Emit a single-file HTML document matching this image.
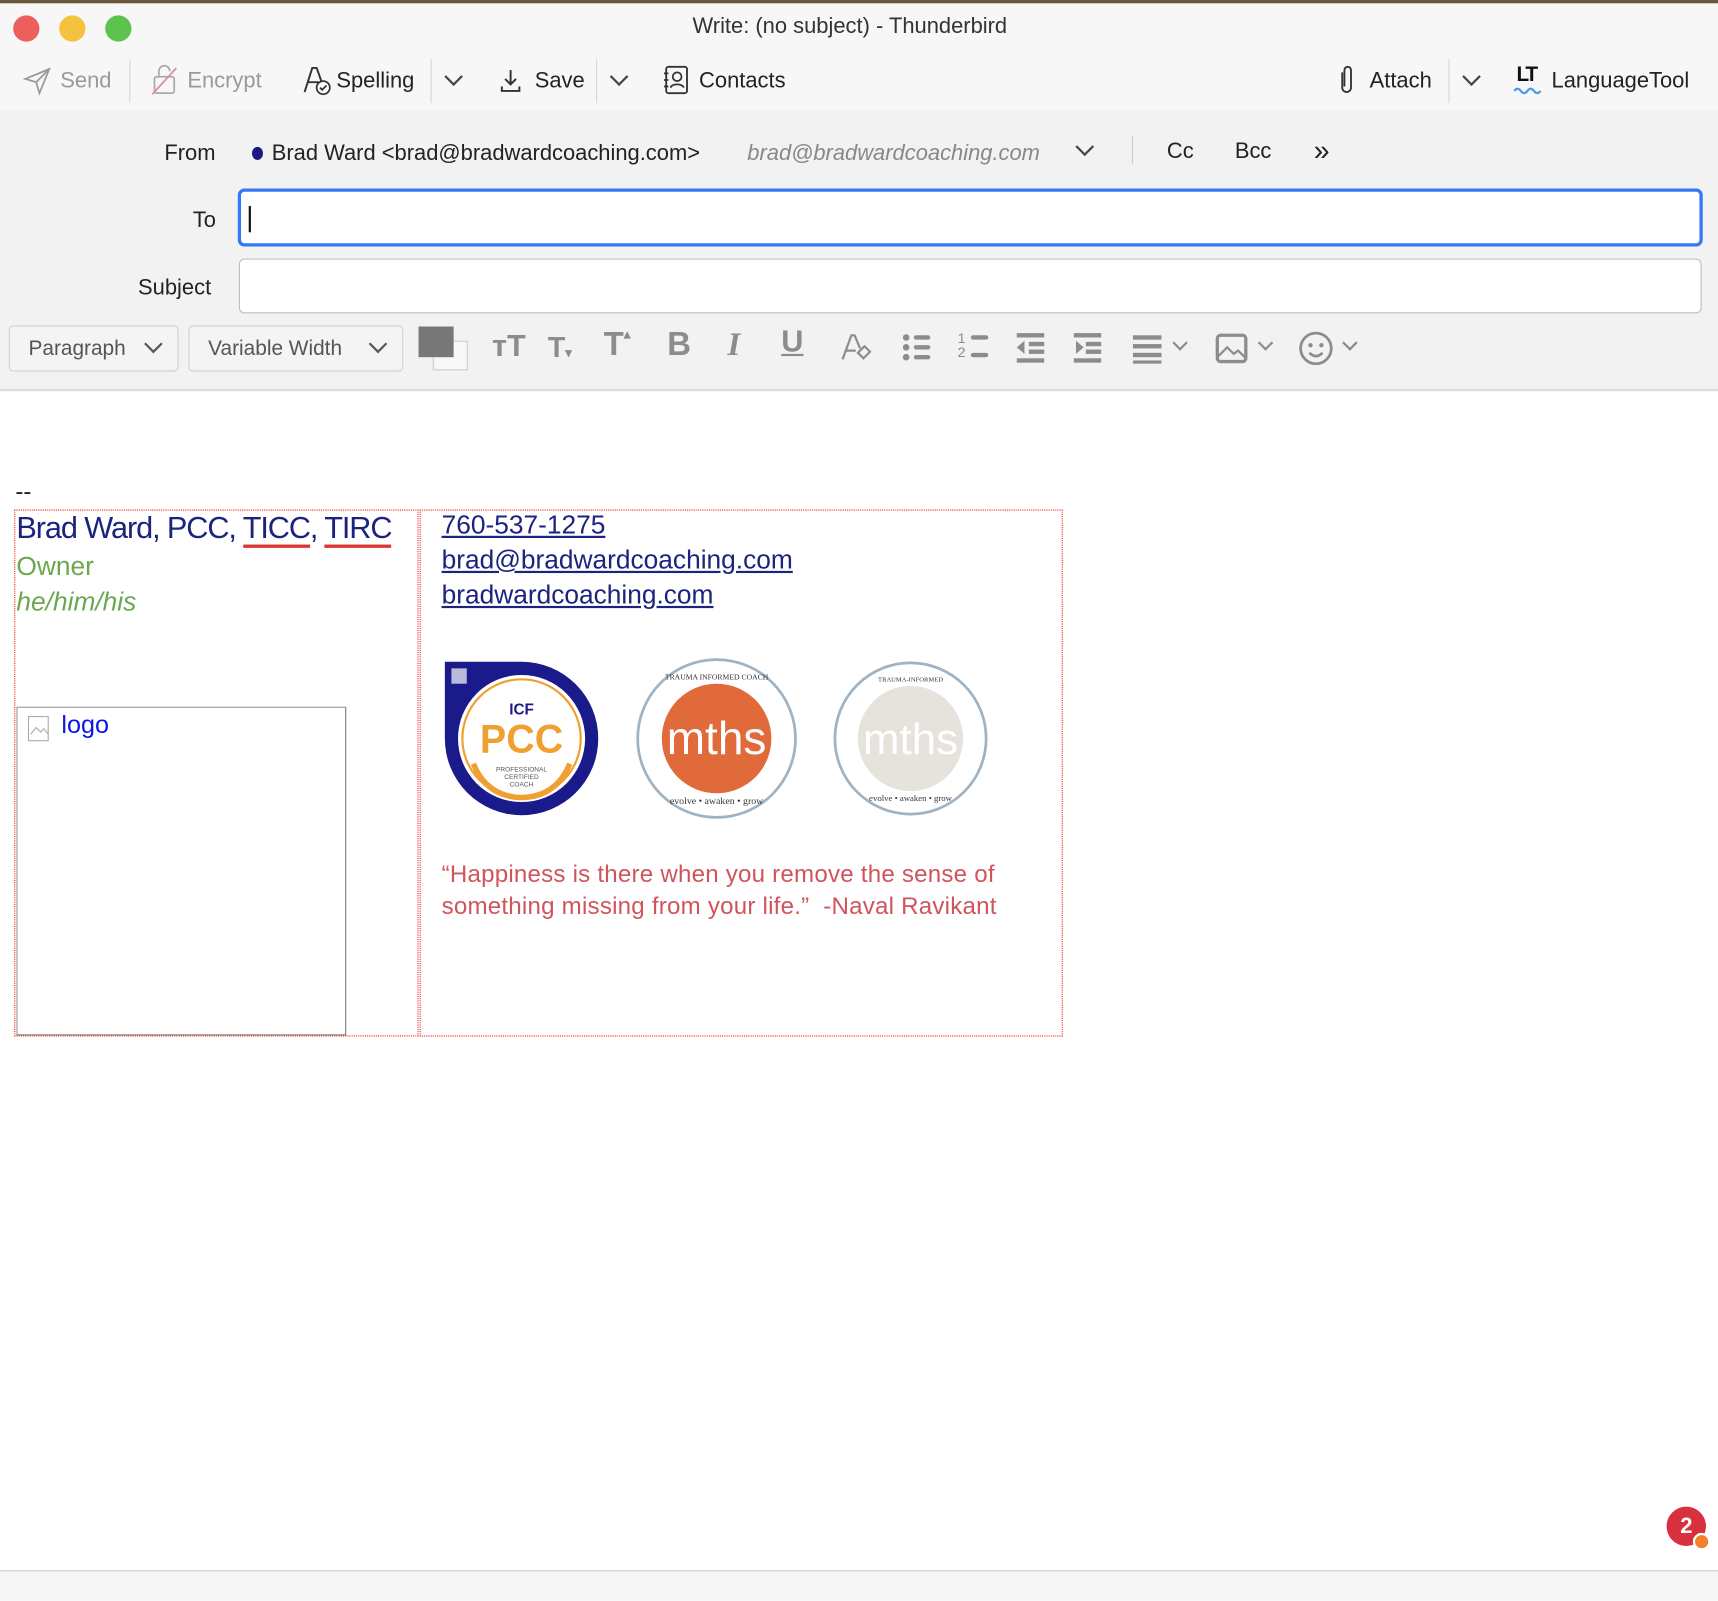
<!DOCTYPE html>
<html><head><meta charset="utf-8"><style>
html,body{margin:0;padding:0;width:1718px;height:1600px;overflow:hidden;background:#fff}
#w{position:absolute;left:0;top:0;width:1568px;height:1460px;transform:scale(1.0957);transform-origin:0 0;font-family:"Liberation Sans",sans-serif;color:#222}
.a{position:absolute;white-space:nowrap}
.tb{font-size:20px;color:#222}
.g{color:#9a9a9a}
.sep{position:absolute;width:1px;background:#d6d6d6}
.chev{position:absolute;width:10px;height:10px;border-right:2px solid #444;border-bottom:2px solid #444;transform:rotate(45deg)}
.ic{position:absolute;color:#8c8c8c;font-weight:bold}
.lnk{color:#1a237e;text-decoration:underline;font-size:24px}
</style></head><body><div id="w">
<div class="a" style="left:0;top:0;width:1568px;height:100px;background:#f7f7f7;border-top:3px solid #6b5a3a"></div>
<div class="a" style="left:12px;top:14px;width:24px;height:24px;border-radius:50%;background:#ed5f5a"></div>
<div class="a" style="left:54px;top:14px;width:24px;height:24px;border-radius:50%;background:#f4c23c"></div>
<div class="a" style="left:96px;top:14px;width:24px;height:24px;border-radius:50%;background:#5ec24f"></div>
<div class="a" style="left:632px;top:13px;font-size:20px;color:#333">Write: (no subject) - Thunderbird</div>

<svg class="a" style="left:20px;top:60px" width="28" height="28" viewBox="0 0 28 28"><path d="M3 12 L25 3 L16 25 L13 15 Z M13 15 L25 3" fill="none" stroke="#999" stroke-width="1.6"/></svg>
<div class="a tb g" style="left:55px;top:63px">Send</div>
<div class="sep" style="left:118px;top:54px;height:40px"></div>
<svg class="a" style="left:136px;top:58px" width="28" height="30" viewBox="0 0 28 30"><rect x="5" y="12" width="18" height="15" rx="2" fill="none" stroke="#aaa" stroke-width="1.6"/><path d="M9 12V7a5 5 0 0 1 10 0" fill="none" stroke="#aaa" stroke-width="1.6"/><path d="M3 28L25 4" stroke="#e08a9a" stroke-width="1.6"/></svg>
<div class="a tb g" style="left:171px;top:63px">Encrypt</div>
<svg class="a" style="left:275px;top:58px" width="30" height="30" viewBox="0 0 30 30"><path d="M3 26 L10 4 L14 4 L19 18 M6 17 H16" fill="none" stroke="#333" stroke-width="1.8"/><circle cx="20" cy="22" r="6" fill="#fff" stroke="#333" stroke-width="1.6"/><path d="M17 22l2 2 4-4" fill="none" stroke="#333" stroke-width="1.6"/></svg>
<div class="a tb" style="left:307px;top:63px">Spelling</div>
<div class="sep" style="left:393px;top:54px;height:40px"></div>
<div class="chev" style="left:408px;top:64px"></div>
<svg class="a" style="left:455px;top:62px" width="22" height="24" viewBox="0 0 22 24"><path d="M11 2V15 M6 10l5 5 5-5 M3 17v4h16v-4" fill="none" stroke="#333" stroke-width="1.8"/></svg>
<div class="a tb" style="left:488px;top:63px">Save</div>
<div class="sep" style="left:544px;top:54px;height:40px"></div>
<div class="chev" style="left:559px;top:64px"></div>
<svg class="a" style="left:604px;top:59px" width="26" height="28" viewBox="0 0 26 28"><rect x="4" y="2" width="19" height="24" rx="2" fill="none" stroke="#333" stroke-width="1.7"/><circle cx="14" cy="11" r="4" fill="none" stroke="#333" stroke-width="1.6"/><path d="M8 21c1-4 11-4 12 0M2 8h4M2 14h4M2 20h4" fill="none" stroke="#333" stroke-width="1.6"/></svg>
<div class="a tb" style="left:638px;top:63px">Contacts</div>

<svg class="a" style="left:1220px;top:58px" width="18" height="30" viewBox="0 0 18 30"><path d="M5 8v14a4 4 0 0 0 8 0V6a3 3 0 0 0-6 0v15" fill="none" stroke="#333" stroke-width="1.7"/></svg>
<div class="a tb" style="left:1250px;top:63px">Attach</div>
<div class="sep" style="left:1322px;top:54px;height:40px"></div>
<div class="chev" style="left:1337px;top:64px"></div>
<div class="a" style="left:1384px;top:58px;font-size:19px;font-weight:bold;color:#111;letter-spacing:-2px">LT</div>
<svg class="a" style="left:1381px;top:78px" width="30" height="8" viewBox="0 0 30 8"><path d="M1 5q3-4 6 0t6 0 6 0 6 0" fill="none" stroke="#4a9be8" stroke-width="2"/></svg>
<div class="a tb" style="left:1416px;top:63px">LanguageTool</div>

<div class="a" style="left:0;top:100px;width:1568px;height:255px;background:#f2f2f2;border-bottom:2px solid #dcdcdc"></div>
<div class="a tb" style="left:150px;top:129px">From</div>
<div class="a" style="left:230px;top:134px;width:10px;height:12px;border-radius:50%;background:#1a1a80"></div>
<div class="a tb" style="left:248px;top:129px">Brad Ward &lt;brad@bradwardcoaching.com&gt;</div>
<div class="a tb" style="left:682px;top:129px;color:#888;font-style:italic">brad@bradwardcoaching.com</div>
<div class="chev" style="left:984px;top:128px"></div>
<div class="sep" style="left:1033px;top:124px;height:26px;background:#ccc"></div>
<div class="a tb" style="left:1065px;top:127px">Cc</div>
<div class="a tb" style="left:1127px;top:127px">Bcc</div>
<div class="a tb" style="left:1199px;top:122px;font-size:26px">»</div>
<div class="a tb" style="left:176px;top:190px">To</div>
<div class="a" style="left:217px;top:172px;width:1331px;height:47px;border:3px solid #3478f6;border-radius:6px;background:#fff"></div>
<div class="a" style="left:227px;top:188px;width:2px;height:24px;background:#111"></div>
<div class="a tb" style="left:126px;top:252px">Subject</div>
<div class="a" style="left:218px;top:236px;width:1333px;height:48px;border:1px solid #bdbdbd;border-radius:5px;background:#fff"></div>

<div class="a" style="left:8px;top:297px;width:153px;height:40px;border:1px solid #cfcfcf;border-radius:4px;background:#f4f4f4"></div>
<div class="a" style="left:26px;top:308px;font-size:19px;color:#555">Paragraph</div>
<div class="chev" style="left:134px;top:308px;border-color:#555"></div>
<div class="a" style="left:172px;top:297px;width:194px;height:40px;border:1px solid #cfcfcf;border-radius:4px;background:#f4f4f4"></div>
<div class="a" style="left:190px;top:308px;font-size:19px;color:#555">Variable Width</div>
<div class="chev" style="left:339px;top:308px;border-color:#555"></div>
<div class="a" style="left:395px;top:311px;width:30px;height:25px;border:1px solid #ccc;background:#f8f8f8"></div>
<div class="a" style="left:382px;top:298px;width:32px;height:28px;background:#777"></div>
<div class="ic" style="left:449px;top:300px;font-size:28px">ᴛT</div>
<div class="ic" style="left:500px;top:302px;font-size:26px">T<span style="font-size:12px">▾</span></div>
<div class="ic" style="left:551px;top:298px;font-size:30px">T<span style="font-size:12px;vertical-align:top">▴</span></div>
<div class="ic" style="left:609px;top:298px;font-size:30px">B</div>
<div class="ic" style="left:664px;top:298px;font-size:30px;font-style:italic;font-family:'Liberation Serif',serif">I</div>
<div class="ic" style="left:713px;top:296px;font-size:28px;text-decoration:underline">U</div>
<svg class="a" style="left:766px;top:302px" width="30" height="30"><path d="M3 26 L11 4 L14 4 L19 16 M6 18 H15" fill="none" stroke="#8c8c8c" stroke-width="2"/><path d="M17 20 l6-6 5 5 -6 6z" fill="none" stroke="#8c8c8c" stroke-width="2"/></svg>
<svg class="a" style="left:822px;top:302px" width="30" height="30"><g fill="#8c8c8c"><circle cx="5" cy="6" r="3"/><circle cx="5" cy="15" r="3"/><circle cx="5" cy="24" r="3"/><rect x="12" y="4" width="15" height="4" rx="2"/><rect x="12" y="13" width="15" height="4" rx="2"/><rect x="12" y="22" width="15" height="4" rx="2"/></g></svg>
<div class="ic" style="left:874px;top:302px;font-size:13px;font-weight:normal;line-height:13px">1<br>2</div>
<svg class="a" style="left:884px;top:302px" width="20" height="30"><g fill="#8c8c8c"><rect x="2" y="4" width="16" height="4" rx="2"/><rect x="2" y="20" width="16" height="4" rx="2"/></g></svg>
<svg class="a" style="left:925px;top:302px" width="30" height="30"><g fill="#8c8c8c"><rect x="3" y="2" width="25" height="4"/><rect x="14" y="10" width="14" height="4"/><rect x="14" y="17" width="14" height="4"/><rect x="3" y="25" width="25" height="4"/><path d="M3 15l7-6v12z"/></g></svg>
<svg class="a" style="left:977px;top:302px" width="30" height="30"><g fill="#8c8c8c"><rect x="3" y="2" width="25" height="4"/><rect x="14" y="10" width="14" height="4"/><rect x="14" y="17" width="14" height="4"/><rect x="3" y="25" width="25" height="4"/><path d="M12 15l-7-6v12z"/></g></svg>
<svg class="a" style="left:1033px;top:304px" width="30" height="28"><g fill="#8c8c8c"><rect x="1" y="2" width="26" height="4"/><rect x="1" y="10" width="26" height="4"/><rect x="1" y="18" width="26" height="4"/><rect x="1" y="25" width="26" height="3"/></g></svg>
<div class="chev" style="left:1072px;top:308px;border-color:#8c8c8c;width:8px;height:8px"></div>
<svg class="a" style="left:1109px;top:303px" width="30" height="30"><rect x="2" y="3" width="26" height="24" rx="3" fill="none" stroke="#8c8c8c" stroke-width="3"/><path d="M3 22l8-8 6 6 4-3 6 6" fill="none" stroke="#8c8c8c" stroke-width="2"/></svg>
<div class="chev" style="left:1150px;top:308px;border-color:#8c8c8c;width:8px;height:8px"></div>
<svg class="a" style="left:1185px;top:302px" width="32" height="32"><circle cx="16" cy="16" r="14" fill="none" stroke="#8c8c8c" stroke-width="2.5"/><circle cx="11" cy="13" r="2" fill="#8c8c8c"/><circle cx="21" cy="13" r="2" fill="#8c8c8c"/><path d="M10 20q6 6 12 0" fill="none" stroke="#8c8c8c" stroke-width="2.5"/></svg>
<div class="chev" style="left:1227px;top:308px;border-color:#8c8c8c;width:8px;height:8px"></div>

<div class="a" style="left:14px;top:436px;font-size:22px;color:#222">--</div>
<div class="a" style="left:13px;top:465px;width:367px;height:479px;border:1px dotted #e22"></div>
<div class="a" style="left:383px;top:465px;width:585px;height:479px;border:1px dotted #e22"></div>
<div class="a" style="left:15px;top:466px;font-size:28px;color:#1a237e;letter-spacing:-1px">Brad Ward, PCC, <span style="border-bottom:3px solid #d33">TICC</span>, <span style="border-bottom:3px solid #d33">TIRC</span></div>
<div class="a" style="left:15px;top:504px;font-size:24px;color:#6aa84f">Owner</div>
<div class="a" style="left:15px;top:536px;font-size:24px;color:#6aa84f;font-style:italic">he/him/his</div>
<div class="a" style="left:15px;top:645px;width:299px;height:298px;border:1px solid #999;border-right-color:#777;border-bottom-color:#777"></div>
<svg class="a" style="left:24px;top:652px" width="26" height="28"><rect x="2" y="2" width="18" height="22" fill="none" stroke="#aaa"/><path d="M4 18l5-6 4 4 3-3 4 5" fill="none" stroke="#aaa"/></svg>
<div class="a" style="left:56px;top:648px;font-size:23px;color:#0b16e6">logo</div>

<div class="a lnk" style="left:403px;top:466px">760-537-1275</div>
<div class="a lnk" style="left:403px;top:498px">brad@bradwardcoaching.com</div>
<div class="a lnk" style="left:403px;top:530px">bradwardcoaching.com</div>

<svg class="a" style="left:404px;top:602px" width="144" height="144" viewBox="0 0 144 144">
<path d="M2 2 H72 A70 70 0 1 1 2 72 Z" fill="#1a1a8a"/>
<circle cx="72" cy="72" r="58" fill="#fff"/>
<circle cx="72" cy="72" r="54" fill="none" stroke="#f0a030" stroke-width="2"/>
<rect x="8" y="8" width="14" height="14" fill="#fff" opacity=".7"/>
<text x="72" y="50" font-family="Liberation Sans" font-size="14" font-weight="bold" fill="#1a1a8a" text-anchor="middle">ICF</text>
<text x="72" y="85" font-family="Liberation Sans" font-size="36" font-weight="bold" fill="#f0a030" text-anchor="middle">PCC</text>
<text x="72" y="102" font-family="Liberation Sans" font-size="6" fill="#555" text-anchor="middle">PROFESSIONAL</text>
<text x="72" y="109" font-family="Liberation Sans" font-size="6" fill="#555" text-anchor="middle">CERTIFIED</text>
<text x="72" y="116" font-family="Liberation Sans" font-size="6" fill="#555" text-anchor="middle">COACH</text>
<path d="M28 95 Q40 125 72 126 Q104 125 116 95" fill="none" stroke="#f0a030" stroke-width="5"/>
</svg>
<svg class="a" style="left:580px;top:600px" width="148" height="148" viewBox="0 0 148 148">
<circle cx="74" cy="74" r="72" fill="#fff" stroke="#9fb3c3" stroke-width="2.5"/>
<circle cx="74" cy="74" r="50" fill="#e06a3a"/>
<text x="74" y="88" font-family="Liberation Sans" font-size="42" fill="#fff" text-anchor="middle">mths</text>
<text x="74" y="20" font-family="Liberation Serif" font-size="7" fill="#333" text-anchor="middle">TRAUMA INFORMED COACH</text>
<text x="74" y="134" font-family="Liberation Serif" font-size="9" fill="#333" text-anchor="middle">evolve • awaken • grow</text>
</svg>
<svg class="a" style="left:760px;top:603px" width="142" height="142" viewBox="0 0 142 142">
<circle cx="71" cy="71" r="69" fill="#fff" stroke="#9fb3c3" stroke-width="2.5"/>
<circle cx="71" cy="71" r="48" fill="#e6e2dc"/>
<text x="71" y="85" font-family="Liberation Sans" font-size="40" fill="#fff" text-anchor="middle">mths</text>
<text x="71" y="19" font-family="Liberation Serif" font-size="6" fill="#333" text-anchor="middle">TRAUMA-INFORMED</text>
<text x="71" y="128" font-family="Liberation Serif" font-size="8" fill="#333" text-anchor="middle">evolve • awaken • grow</text>
</svg>

<div class="a" style="left:403px;top:783px;font-size:22px;color:#d0545c;line-height:29px;letter-spacing:0.2px">“Happiness is there when you remove the sense of<br>something missing from your life.”&nbsp; -Naval Ravikant</div>

<div class="a" style="left:1521px;top:1375px;width:36px;height:36px;border-radius:50%;background:#d7303f;color:#fff;font-size:20px;font-weight:bold;text-align:center;line-height:36px">2</div>
<div class="a" style="left:1545px;top:1399px;width:12px;height:12px;border-radius:50%;background:#f08030;border:2px solid #fff"></div>
<div class="a" style="left:0;top:1433px;width:1568px;height:27px;background:#f6f6f6;border-top:1px solid #d0d0d0"></div>
</div></body></html>
